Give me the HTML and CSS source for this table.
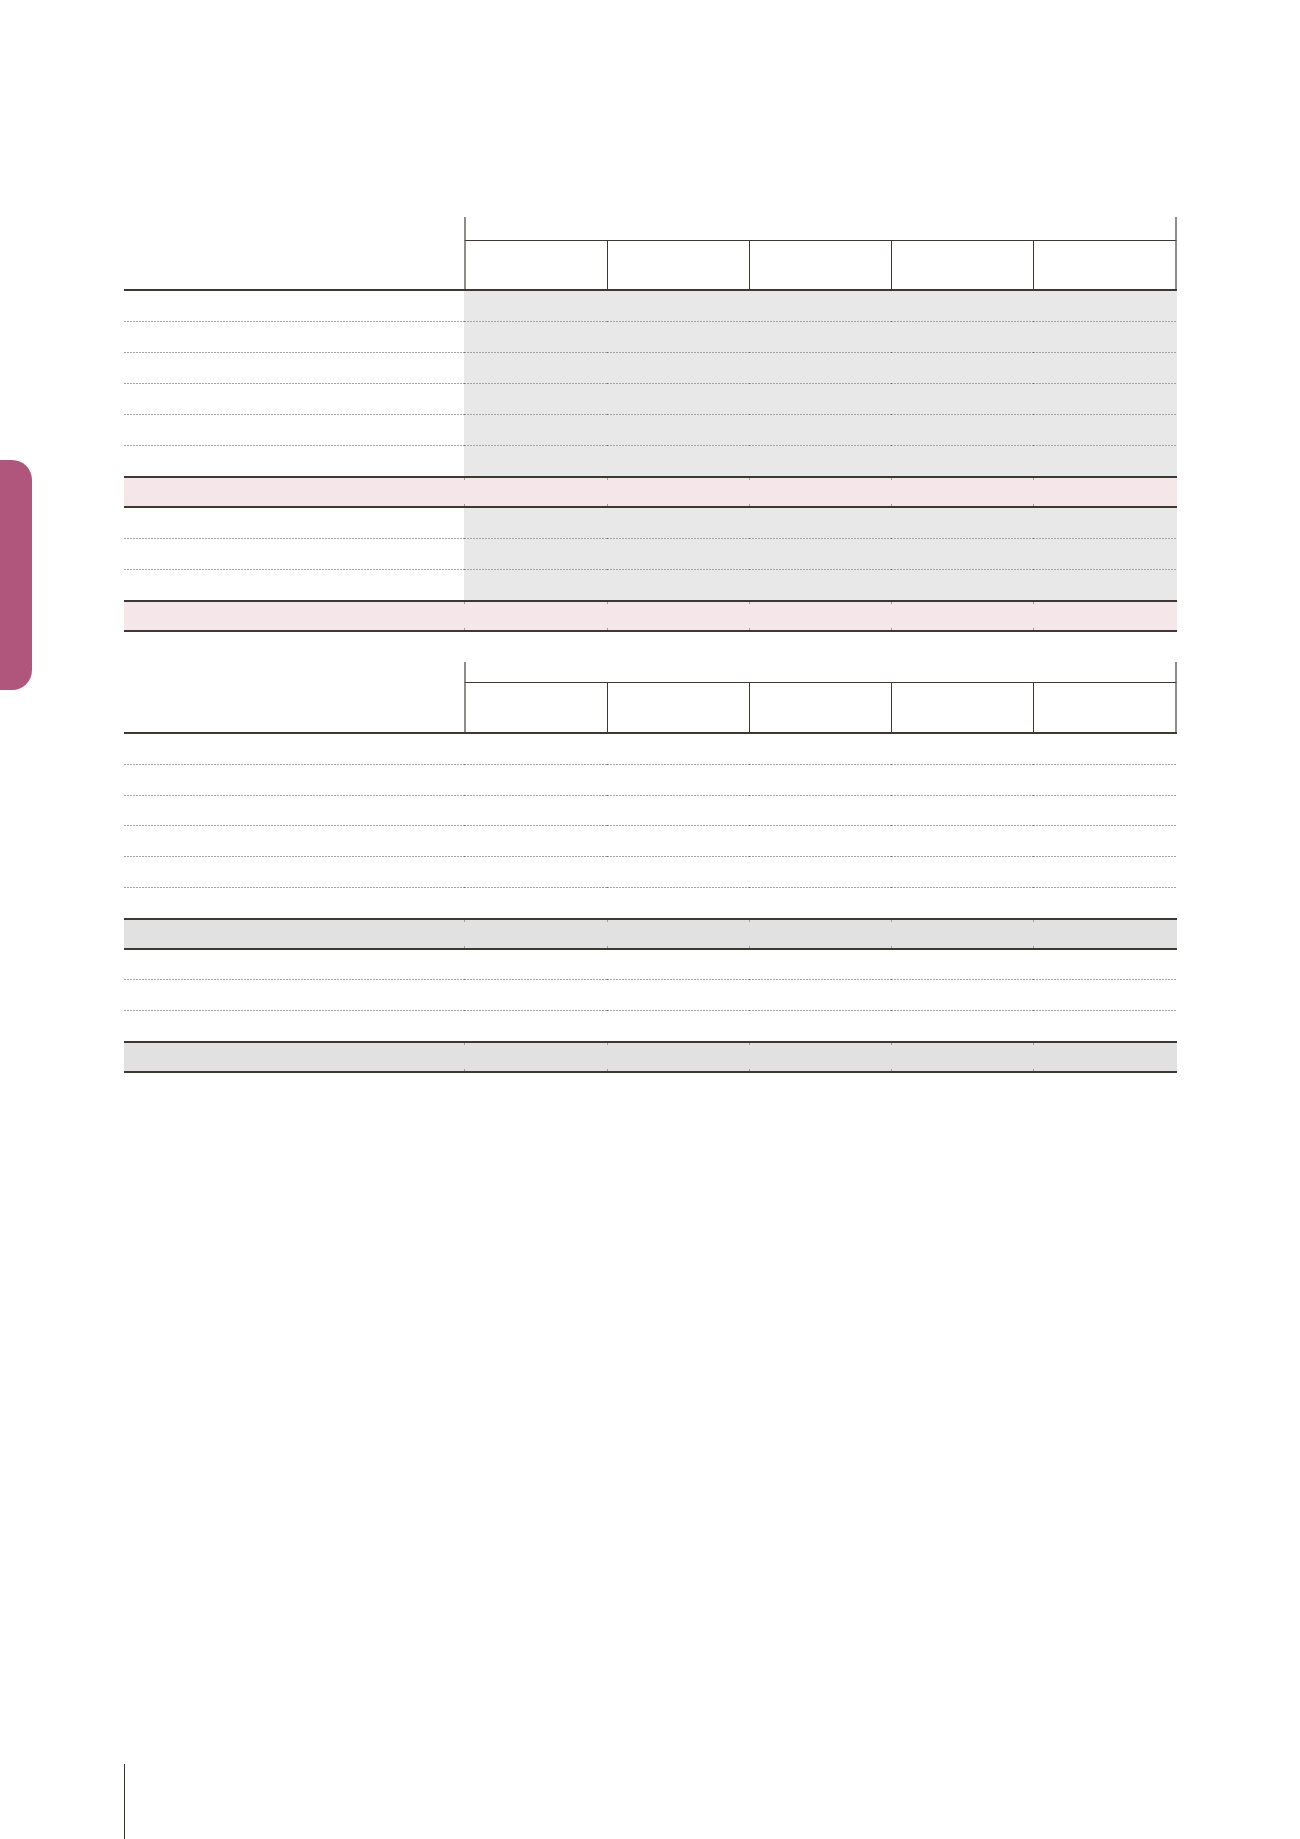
FILE: index.html
```html
<!DOCTYPE html>
<html lang="en">
<head>
<meta charset="utf-8">
<title>Ledger sheet</title>
<link rel="stylesheet" href="styles.css">
</head>
<body>
<div class="page">
  <div class="edge">
    <div class="edge__tab"></div>
  </div>
  <main class="sheet">
    <section class="ledger ledger--shaded">
      <div class="ledger__head">
        <div class="ledger__stub"></div>
        <div class="ledger__span"></div>
        <div class="ledger__col ledger__col--first"></div>
        <div class="ledger__col"></div>
        <div class="ledger__col"></div>
        <div class="ledger__col"></div>
        <div class="ledger__col ledger__col--last"></div>
      </div>
      <div class="row row--dotted"><div class="cell cell--label"></div><div class="cell"></div><div class="cell"></div><div class="cell"></div><div class="cell"></div><div class="cell"></div></div>
      <div class="row row--dotted"><div class="cell cell--label"></div><div class="cell"></div><div class="cell"></div><div class="cell"></div><div class="cell"></div><div class="cell"></div></div>
      <div class="row row--dotted"><div class="cell cell--label"></div><div class="cell"></div><div class="cell"></div><div class="cell"></div><div class="cell"></div><div class="cell"></div></div>
      <div class="row row--dotted"><div class="cell cell--label"></div><div class="cell"></div><div class="cell"></div><div class="cell"></div><div class="cell"></div><div class="cell"></div></div>
      <div class="row row--dotted"><div class="cell cell--label"></div><div class="cell"></div><div class="cell"></div><div class="cell"></div><div class="cell"></div><div class="cell"></div></div>
      <div class="row row--last"><div class="cell cell--label"></div><div class="cell"></div><div class="cell"></div><div class="cell"></div><div class="cell"></div><div class="cell"></div></div>
      <div class="row row--band"><div class="cell cell--label"></div><div class="cell"></div><div class="cell"></div><div class="cell"></div><div class="cell"></div><div class="cell"></div></div>
      <div class="row row--dotted"><div class="cell cell--label"></div><div class="cell"></div><div class="cell"></div><div class="cell"></div><div class="cell"></div><div class="cell"></div></div>
      <div class="row row--dotted"><div class="cell cell--label"></div><div class="cell"></div><div class="cell"></div><div class="cell"></div><div class="cell"></div><div class="cell"></div></div>
      <div class="row row--last"><div class="cell cell--label"></div><div class="cell"></div><div class="cell"></div><div class="cell"></div><div class="cell"></div><div class="cell"></div></div>
      <div class="row row--band"><div class="cell cell--label"></div><div class="cell"></div><div class="cell"></div><div class="cell"></div><div class="cell"></div><div class="cell"></div></div>
    </section>

    <section class="ledger ledger--plain">
      <div class="ledger__head">
        <div class="ledger__stub"></div>
        <div class="ledger__span"></div>
        <div class="ledger__col ledger__col--first"></div>
        <div class="ledger__col"></div>
        <div class="ledger__col"></div>
        <div class="ledger__col"></div>
        <div class="ledger__col ledger__col--last"></div>
      </div>
      <div class="row row--dotted"><div class="cell cell--label"></div><div class="cell"></div><div class="cell"></div><div class="cell"></div><div class="cell"></div><div class="cell"></div></div>
      <div class="row row--dotted"><div class="cell cell--label"></div><div class="cell"></div><div class="cell"></div><div class="cell"></div><div class="cell"></div><div class="cell"></div></div>
      <div class="row row--dotted"><div class="cell cell--label"></div><div class="cell"></div><div class="cell"></div><div class="cell"></div><div class="cell"></div><div class="cell"></div></div>
      <div class="row row--dotted"><div class="cell cell--label"></div><div class="cell"></div><div class="cell"></div><div class="cell"></div><div class="cell"></div><div class="cell"></div></div>
      <div class="row row--dotted"><div class="cell cell--label"></div><div class="cell"></div><div class="cell"></div><div class="cell"></div><div class="cell"></div><div class="cell"></div></div>
      <div class="row row--last"><div class="cell cell--label"></div><div class="cell"></div><div class="cell"></div><div class="cell"></div><div class="cell"></div><div class="cell"></div></div>
      <div class="row row--band"><div class="cell cell--label"></div><div class="cell"></div><div class="cell"></div><div class="cell"></div><div class="cell"></div><div class="cell"></div></div>
      <div class="row row--dotted"><div class="cell cell--label"></div><div class="cell"></div><div class="cell"></div><div class="cell"></div><div class="cell"></div><div class="cell"></div></div>
      <div class="row row--dotted"><div class="cell cell--label"></div><div class="cell"></div><div class="cell"></div><div class="cell"></div><div class="cell"></div><div class="cell"></div></div>
      <div class="row row--last"><div class="cell cell--label"></div><div class="cell"></div><div class="cell"></div><div class="cell"></div><div class="cell"></div><div class="cell"></div></div>
      <div class="row row--band"><div class="cell cell--label"></div><div class="cell"></div><div class="cell"></div><div class="cell"></div><div class="cell"></div><div class="cell"></div></div>
    </section>

    <div class="margin-rule"></div>
  </main>
</div>
</body>
</html>
```

FILE: styles.css
```css
* { box-sizing: border-box; }

html, body {
  margin: 0;
  padding: 0;
  background: #ffffff;
  font-family: "Liberation Sans", Arial, sans-serif;
}

.page {
  display: grid;
  grid-template-columns: 124px 1053px;
  width: 1300px;
  min-height: 1839px;
}

.edge {
  padding-top: 460px;
}

.edge__tab {
  width: 32px;
  height: 230px;
  background: #b0557c;
  border-radius: 0 20px 20px 0;
}

.sheet {
  padding-top: 217px;
  display: flex;
  flex-direction: column;
}

/* ---------- ledger tables ---------- */
.ledger {
  --cols: 340px 143px 142px 142px 142px 144px;
  --row: 31px;
  --span-h: 24px;
  --sub-h: 48px;
  --dark: #3d3832;
  --edge: #8f8d89;
  --dot: #a5a5a3;
  --data-bg: transparent;
  --band-bg: #f5e6ea;
  width: 1053px;
}

.ledger--shaded {
  --data-bg: #e7e8e7;
  --band-bg: #f5e6ea;
}

.ledger--plain {
  --row: 30.75px;
  --span-h: 21px;
  --sub-h: 49px;
  --band-bg: #e1e1e1;
  margin-top: 30px;
}

.ledger__head {
  display: grid;
  grid-template-columns: var(--cols);
  grid-template-rows: var(--span-h) var(--sub-h);
  border-bottom: 2px solid var(--dark);
}

.ledger__stub {
  grid-row: 1 / span 2;
  grid-column: 1;
}

.ledger__span {
  grid-row: 1;
  grid-column: 2 / span 5;
  border-left: 2px solid var(--edge);
  border-right: 2px solid var(--edge);
  border-bottom: 1px solid var(--dark);
}

.ledger__col {
  grid-row: 2;
  border-left: 1px solid var(--dark);
}

.ledger__col--first {
  border-left: 2px solid var(--edge);
}

.ledger__col--last {
  border-right: 2px solid var(--edge);
}

/* ---------- rows ---------- */
.row {
  display: grid;
  grid-template-columns: var(--cols);
  height: var(--row);
}

.row--last {
  height: calc(var(--row) - 1px);
}

.cell {
  background-color: var(--data-bg);
}

.cell--label {
  background-color: transparent;
}

.row--dotted .cell {
  background-image:
    linear-gradient(#6f6c68, #6f6c68),
    repeating-linear-gradient(90deg, var(--dot) 0 2px, transparent 2px 3px);
  background-size: 1px 1px, 100% 1px;
  background-position: left bottom, left bottom;
  background-repeat: no-repeat, no-repeat;
}

.row--dotted .cell--label {
  background-image: repeating-linear-gradient(90deg, var(--dot) 0 2px, transparent 2px 3px);
  background-size: 100% 1px;
  background-position: left bottom;
}

.row--band {
  height: 32px;
  border-top: 2px solid var(--dark);
  border-bottom: 2px solid var(--dark);
}

.row--band .cell {
  background-color: var(--band-bg);
  background-image:
    linear-gradient(#a39f9b, #a39f9b),
    linear-gradient(#a39f9b, #a39f9b);
  background-size: 1px 2px, 1px 2px;
  background-position: left top, left bottom;
  background-repeat: no-repeat;
}

.row--band .cell--label {
  background-image: none;
}

/* ---------- bottom page rule ---------- */
.margin-rule {
  width: 1px;
  height: 75px;
  margin-top: auto;
  background: #35312c;
}
```
